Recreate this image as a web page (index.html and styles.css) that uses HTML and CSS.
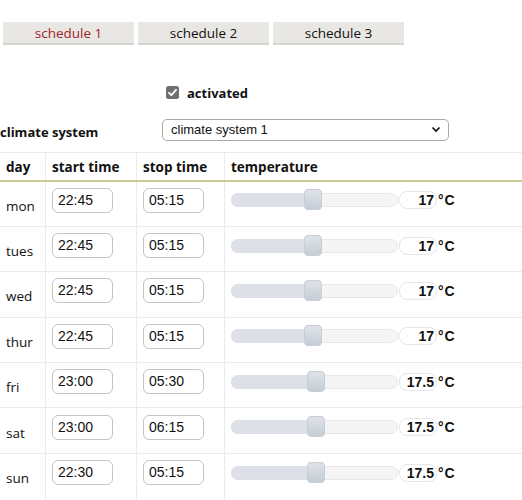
FILE: index.html
```html
<!DOCTYPE html>
<html>
<head>
<meta charset="utf-8">
<link rel="stylesheet" href="styles.css">
</head>
<body>
<div class="tabs">
  <div class="tab active">schedule 1</div>
  <div class="tab">schedule 2</div>
  <div class="tab">schedule 3</div>
</div>
<div class="activated">
  <span class="check"><svg viewBox="0 0 13 13" width="13" height="13"><rect x="0" y="0" width="13" height="13" rx="2.5" fill="#6f6f6f"/><path d="M3 6.8 L5.4 9.2 L10 3.8" fill="none" stroke="#fff" stroke-width="1.8" stroke-linecap="round" stroke-linejoin="round"/></svg></span>
  <span class="act-label">activated</span>
</div>
<div class="climate">
  <span class="climate-label">climate system</span>
  <div class="select">
    <span>climate system 1</span>
    <svg width="10" height="7" viewBox="0 0 10 7"><path d="M1.5 1.5 L5 5 L8.5 1.5" fill="none" stroke="#111" stroke-width="1.7"/></svg>
  </div>
</div>
<table class="sched">
  <thead>
    <tr><th class="c-day">day</th><th class="c-start">start time</th><th class="c-stop">stop time</th><th class="c-temp">temperature</th></tr>
  </thead>
  <tbody>
    <tr><td>mon</td><td><div class="tinput">22:45</div></td><td><div class="tinput">05:15</div></td><td><div class="temp"><div class="track"><div class="fill" style="width:80px"></div><div class="thumb" style="left:72px"></div></div><div class="val">17</div><span class="unit">°C</span></div></td></tr>
    <tr><td>tues</td><td><div class="tinput">22:45</div></td><td><div class="tinput">05:15</div></td><td><div class="temp"><div class="track"><div class="fill" style="width:80px"></div><div class="thumb" style="left:72px"></div></div><div class="val">17</div><span class="unit">°C</span></div></td></tr>
    <tr><td>wed</td><td><div class="tinput">22:45</div></td><td><div class="tinput">05:15</div></td><td><div class="temp"><div class="track"><div class="fill" style="width:80px"></div><div class="thumb" style="left:72px"></div></div><div class="val">17</div><span class="unit">°C</span></div></td></tr>
    <tr><td>thur</td><td><div class="tinput">22:45</div></td><td><div class="tinput">05:15</div></td><td><div class="temp"><div class="track"><div class="fill" style="width:80px"></div><div class="thumb" style="left:72px"></div></div><div class="val">17</div><span class="unit">°C</span></div></td></tr>
    <tr><td>fri</td><td><div class="tinput">23:00</div></td><td><div class="tinput">05:30</div></td><td><div class="temp"><div class="track"><div class="fill" style="width:83px"></div><div class="thumb" style="left:75px"></div></div><div class="val">17.5</div><span class="unit">°C</span></div></td></tr>
    <tr><td>sat</td><td><div class="tinput">23:00</div></td><td><div class="tinput">06:15</div></td><td><div class="temp"><div class="track"><div class="fill" style="width:83px"></div><div class="thumb" style="left:75px"></div></div><div class="val">17.5</div><span class="unit">°C</span></div></td></tr>
    <tr><td>sun</td><td><div class="tinput">22:30</div></td><td><div class="tinput">05:15</div></td><td><div class="temp"><div class="track"><div class="fill" style="width:83px"></div><div class="thumb" style="left:75px"></div></div><div class="val">17.5</div><span class="unit">°C</span></div></td></tr>
  </tbody>
</table>
</body>
</html>
```
FILE: styles.css
```css
html, body {
  margin: 0;
  padding: 0;
  background: #fff;
}
body {
  font-family: "Open Sans", "DejaVu Sans", sans-serif;
  color: #111;
  font-size: 13px;
  overflow: hidden;
  width: 522px;
}
.tabs {
  display: flex;
  gap: 4px;
  padding: 22px 0 0 3px;
}
.tab {
  width: 131px;
  height: 21px;
  box-sizing: content-box;
  background: #e9e7e3;
  border-bottom: 2px solid #d7d5d1;
  text-align: center;
  line-height: 22px;
  font-size: 13.5px;
  color: #111;
}
.tab.active {
  color: #a1242a;
}
.activated {
  display: flex;
  align-items: center;
  margin: 40px 0 0 166px;
  height: 14px;
}
.check {
  display: block;
  width: 13px;
  height: 13px;
}
.check svg { display: block; }
.act-label {
  font-weight: bold;
  margin-left: 8px;
  font-size: 13px;
  padding-top: 1px;
}
.climate {
  display: flex;
  align-items: center;
  margin-top: 19px;
  height: 23px;
}
.climate-label {
  width: 162px;
  font-weight: bold;
  font-size: 13px;
  padding-top: 5px;
}
.select {
  width: 287px;
  height: 22px;
  box-sizing: border-box;
  border: 1px solid #a9a9a9;
  border-radius: 5px;
  display: flex;
  align-items: center;
  justify-content: space-between;
  padding: 0 7px 0 8px;
  font-family: "Liberation Sans", Arial, sans-serif;
  font-size: 13px;
  color: #111;
}
.select svg { display: block; }
.sched {
  margin-top: 11px;
  border-collapse: collapse;
  width: 540px;
  table-layout: fixed;
}
.sched th, .sched td {
  border-left: 1px solid #ebebeb;
  border-top: 1px solid #ebebeb;
  padding: 0 0 0 6px;
  text-align: left;
}
.sched th:first-child, .sched td:first-child {
  border-left: none;
}
.sched th {
  height: 27px;
  font-weight: bold;
  font-size: 13.5px;
  border-bottom: 2px solid #cdcc90;
  vertical-align: middle;
}
.c-day { width: 39px; }
.c-start { width: 84px; }
.c-stop { width: 81px; }
.sched td {
  height: 45.4px;
  box-sizing: border-box;
  vertical-align: middle;
  font-size: 13.5px;
  padding-top: 4px;
}
.tinput {
  width: 61px;
  height: 25px;
  box-sizing: border-box;
  border: 1px solid #c4c4c4;
  border-radius: 6px;
  padding: 0 0 0 5px;
  line-height: 22px;
  font-family: "Liberation Sans", Arial, sans-serif;
  font-size: 14px;
  margin-bottom: 11px;
}
.temp {
  display: flex;
  align-items: center;
  margin-bottom: 11px;
  height: 22px;
}
.track {
  position: relative;
  width: 167px;
  height: 14px;
  box-sizing: border-box;
  background: #f5f5f5;
  border: 1px solid #e7e7e7;
  border-radius: 7px;
}
.fill {
  position: absolute;
  left: -1px;
  top: -1px;
  bottom: -1px;
  background: #dde1e7;
  border-radius: 7px 0 0 7px;
}
.thumb {
  position: absolute;
  top: -5px;
  width: 18px;
  height: 21px;
  box-sizing: border-box;
  border-radius: 4px;
  background: linear-gradient(#dfe3e8, #c5cdd6);
  border: 1px solid #c9ced5;
}
.val {
  width: 38px;
  height: 18px;
  box-sizing: border-box;
  border: 1px solid #e6e6e6;
  border-radius: 8px;
  margin-left: 1px;
  text-align: right;
  padding-right: 2px;
  font-family: "Liberation Sans", Arial, sans-serif;
  font-weight: bold;
  font-size: 14px;
  line-height: 16px;
}
.unit {
  margin-left: 1px;
  font-family: "Liberation Sans", Arial, sans-serif;
  font-weight: bold;
  font-size: 14px;
  letter-spacing: 1px;
}
```
